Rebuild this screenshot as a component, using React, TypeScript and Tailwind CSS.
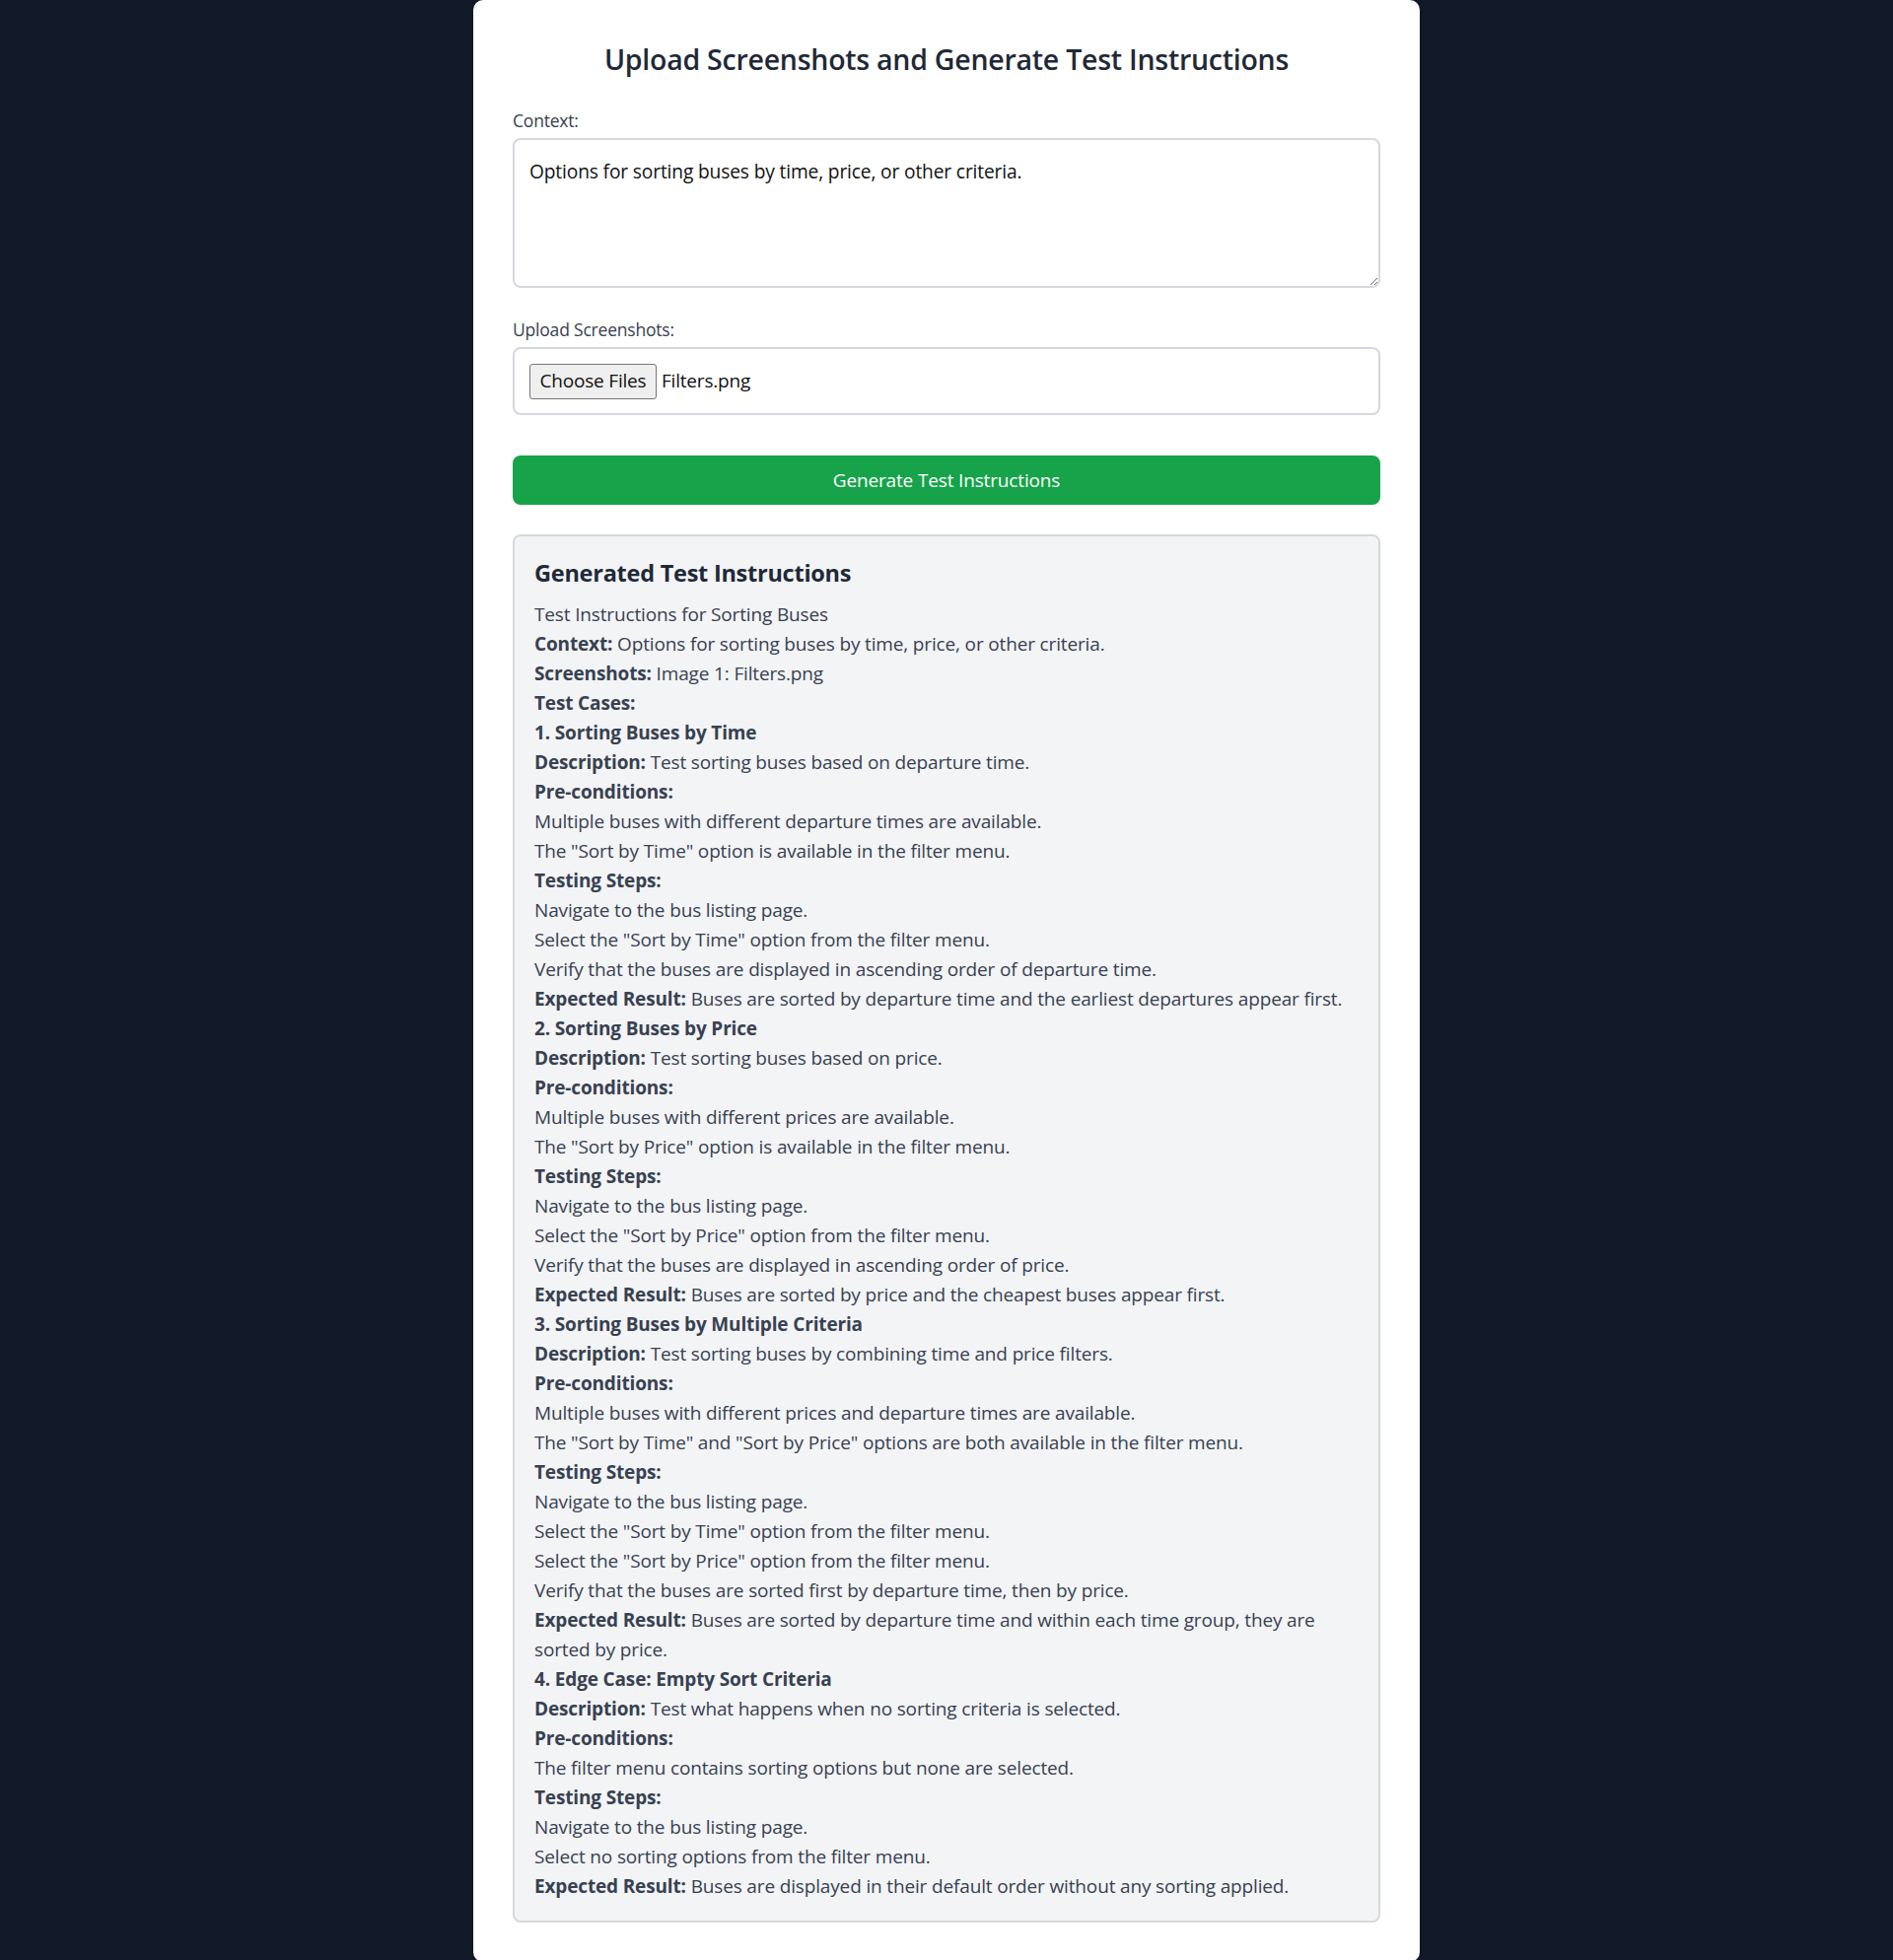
import { useState } from "react";

type Part = { bold?: string; text?: string };

const lines: Part[] = [
  { text: "Test Instructions for Sorting Buses" },
  { bold: "Context:", text: " Options for sorting buses by time, price, or other criteria." },
  { bold: "Screenshots:", text: " Image 1: Filters.png" },
  { bold: "Test Cases:" },
  { bold: "1. Sorting Buses by Time" },
  { bold: "Description:", text: " Test sorting buses based on departure time." },
  { bold: "Pre-conditions:" },
  { text: "Multiple buses with different departure times are available." },
  { text: 'The "Sort by Time" option is available in the filter menu.' },
  { bold: "Testing Steps:" },
  { text: "Navigate to the bus listing page." },
  { text: 'Select the "Sort by Time" option from the filter menu.' },
  { text: "Verify that the buses are displayed in ascending order of departure time." },
  {
    bold: "Expected Result:",
    text: " Buses are sorted by departure time and the earliest departures appear first.",
  },
  { bold: "2. Sorting Buses by Price" },
  { bold: "Description:", text: " Test sorting buses based on price." },
  { bold: "Pre-conditions:" },
  { text: "Multiple buses with different prices are available." },
  { text: 'The "Sort by Price" option is available in the filter menu.' },
  { bold: "Testing Steps:" },
  { text: "Navigate to the bus listing page." },
  { text: 'Select the "Sort by Price" option from the filter menu.' },
  { text: "Verify that the buses are displayed in ascending order of price." },
  { bold: "Expected Result:", text: " Buses are sorted by price and the cheapest buses appear first." },
  { bold: "3. Sorting Buses by Multiple Criteria" },
  { bold: "Description:", text: " Test sorting buses by combining time and price filters." },
  { bold: "Pre-conditions:" },
  { text: "Multiple buses with different prices and departure times are available." },
  { text: 'The "Sort by Time" and "Sort by Price" options are both available in the filter menu.' },
  { bold: "Testing Steps:" },
  { text: "Navigate to the bus listing page." },
  { text: 'Select the "Sort by Time" option from the filter menu.' },
  { text: 'Select the "Sort by Price" option from the filter menu.' },
  { text: "Verify that the buses are sorted first by departure time, then by price." },
  {
    bold: "Expected Result:",
    text: " Buses are sorted by departure time and within each time group, they are sorted by price.",
  },
  { bold: "4. Edge Case: Empty Sort Criteria" },
  { bold: "Description:", text: " Test what happens when no sorting criteria is selected." },
  { bold: "Pre-conditions:" },
  { text: "The filter menu contains sorting options but none are selected." },
  { bold: "Testing Steps:" },
  { text: "Navigate to the bus listing page." },
  { text: "Select no sorting options from the filter menu." },
  {
    bold: "Expected Result:",
    text: " Buses are displayed in their default order without any sorting applied.",
  },
];

export default function App() {
  const [context, setContext] = useState(
    "Options for sorting buses by time, price, or other criteria.",
  );

  return (
    <main className="min-h-screen bg-[#111827] font-['Open_Sans','Noto_Sans',sans-serif]">
      <div className="mx-auto w-[960px] min-h-[1988px] rounded-[10px] bg-white px-10 pt-10 pb-10">
        <h1 className="mb-[30px] text-center text-[28.5px] leading-[40px] font-semibold tracking-[-0.25px] text-[#1f2937]">
          Upload Screenshots and Generate Test Instructions
        </h1>

        <label className="mb-[5px] block text-[17.5px] leading-[25px] font-medium tracking-[-0.2px] text-[#374151]">
          Context:
        </label>
        <textarea
          value={context}
          onChange={(e) => setContext(e.target.value)}
          className="block h-[152px] w-full rounded-[8px] border-2 border-[#d5d8de] px-[15px] pt-[17px] pb-[11px] text-[19.2px] leading-[30px] tracking-[-0.15px] text-[#111] outline-none"
        />

        <label className="mt-[30px] mb-[5px] block text-[17.5px] leading-[25px] font-medium tracking-[-0.2px] text-[#374151]">
          Upload Screenshots:
        </label>
        <div className="flex h-[69px] items-center rounded-[8px] border-2 border-[#d5d8de] px-[15px]">
          <span className="flex h-[36px] w-[129px] items-center justify-center rounded-[3px] border border-[#767676] bg-[#efefef] text-[19px] tracking-[-0.2px] text-[#111]">
            Choose Files
          </span>
          <span className="ml-[5px] text-[19px] tracking-[-0.2px] text-[#111]">Filters.png</span>
        </div>

        <button className="mt-[41px] flex h-[50px] w-full items-center justify-center rounded-[8px] bg-[#16a34a] text-[19px] tracking-[-0.15px] text-white">
          Generate Test Instructions
        </button>

        <section className="mt-[30px] rounded-[8px] border-2 border-[#d5d8de] bg-[#f3f4f6] px-[20px] pt-[20px] pb-[20px]">
          <h2 className="mb-[9px] text-[23.5px] leading-[35px] font-bold tracking-[-0.25px] text-[#1f2937]">
            Generated Test Instructions
          </h2>
          <div className="text-[19px] leading-[30px] tracking-[-0.15px] text-[#374151]">
            {lines.map((line, i) => (
              <p key={i}>
                {line.bold && <strong className="font-bold">{line.bold}</strong>}
                {line.text}
              </p>
            ))}
          </div>
        </section>
      </div>
    </main>
  );
}
